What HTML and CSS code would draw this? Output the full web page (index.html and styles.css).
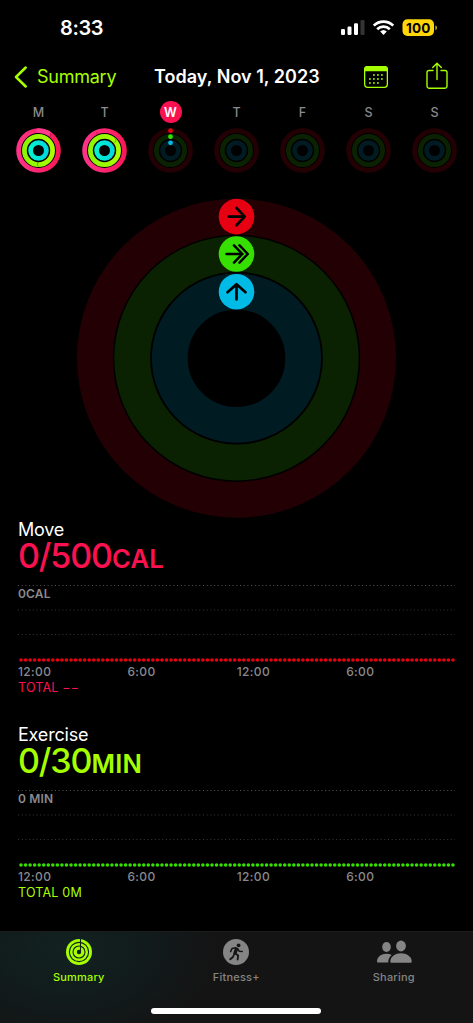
FILE: index.html
```html
<!DOCTYPE html>
<html lang="en">
<head>
<meta charset="utf-8">
<title>Activity Summary</title>
<link rel="stylesheet" href="styles.css">
</head>
<body>
<svg class="defs" width="0" height="0" aria-hidden="true">
  <defs>
    <linearGradient id="pink" x1="0" y1="0" x2="1" y2="0"><stop offset="0" stop-color="#ff3288"/><stop offset="1" stop-color="#f9195a"/></linearGradient>
    <linearGradient id="lime" x1="0" y1="0" x2="1" y2="0"><stop offset="0" stop-color="#8cf500"/><stop offset="1" stop-color="#aaff00"/></linearGradient>
    <linearGradient id="aqua" x1="0" y1="0" x2="1" y2="0"><stop offset="0" stop-color="#00f2d0"/><stop offset="1" stop-color="#00d8e0"/></linearGradient>
    <g id="tracks" fill="none">
      <circle cx="22.5" cy="22.5" r="19.9" stroke="#230004" stroke-width="4.8"/>
      <circle cx="22.5" cy="22.5" r="14.1" stroke="#0a2202" stroke-width="4.8"/>
      <circle cx="22.5" cy="22.5" r="7.9" stroke="#011b23" stroke-width="4.8"/>
    </g>
    <g id="full" fill="none">
      <circle cx="22.5" cy="22.5" r="19.9" stroke="url(#pink)" stroke-width="4.8"/>
      <circle cx="22.5" cy="22.5" r="14.1" stroke="url(#lime)" stroke-width="4.8"/>
      <circle cx="22.5" cy="22.5" r="7.9" stroke="url(#aqua)" stroke-width="4.8"/>
    </g>
  </defs>
</svg>
<div class="screen">
  <header class="status">
    <span class="clock">8:33</span>
    <svg class="status-icons" width="100" height="20" viewBox="0 0 100 20">
      <g fill="#fff">
        <rect x="1" y="11" width="4" height="6" rx="1.2"/>
        <rect x="7.5" y="8.5" width="4" height="8.500" rx="1.2"/>
        <rect x="14" y="5.200" width="4" height="11.800" rx="1.2"/>
      </g>
      <rect x="20.500" y="2" width="4" height="15" rx="1.2" fill="#343436"/>
      <g fill="none" stroke="#fff" stroke-width="2.700">
        <path d="M33.800 7.600a13.600 13.600 0 0 1 19.400 0"/>
        <path d="M37.200 11.200a9 9 0 0 1 12.600 0"/>
      </g>
      <path d="M43.500 17l-3.300-3.400a4.900 4.900 0 0 1 6.600 0z" fill="#fff"/>
      <rect x="62.500" y="1.300" width="31.500" height="16.700" rx="5" fill="#ffd60a"/>
      <path d="M95.500 7.200a3 3 0 0 1 0 5z" fill="#ffd60a"/>
      <text class="battery" x="78.200" y="14.700" text-anchor="middle">100</text>
    </svg>
  </header>

  <nav class="nav">
    <svg width="14" height="22" viewBox="0 0 14 22"><path d="M11.700 1.500L2 11l9.700 9.500" fill="none" stroke="#a6ff00" stroke-width="2.500" stroke-linecap="round" stroke-linejoin="round"/></svg>
    <span class="back">Summary</span>
    <h1 class="title">Today, Nov 1, 2023</h1>
    <svg class="calendar" width="24" height="22" viewBox="0 0 24 22">
      <rect x=".65" y=".65" width="22.700" height="20.700" rx="3" fill="none" stroke="#a6ff00" stroke-width="1.300"/>
      <path d="M0 5.300V3.500A3.500 3.500 0 0 1 3.500 0h17A3.500 3.500 0 0 1 24 3.500v1.800z" fill="#a6ff00"/>
      <path d="M9 9h10.500M5 13h14.500M5 17h10.500" stroke="#a6ff00" stroke-width="1.600" stroke-dasharray="1.800 2.200" fill="none"/>
    </svg>
    <svg class="share" width="22" height="28" viewBox="0 0 22 28"><path d="M7 8.500H3A2 2 0 0 0 1 10.500V24a2.300 2.300 0 0 0 2.300 2.300h15.400A2.300 2.300 0 0 0 21 24V10.500a2 2 0 0 0-2-2h-4M11 17.500V1.500M6.700 5.500L11 1.200l4.300 4.300" fill="none" stroke="#a6ff00" stroke-width="1.400" stroke-linecap="round" stroke-linejoin="round"/></svg>
  </nav>

  <section class="week">
    <div class="day"><span class="letter">M</span>
      <svg width="45" height="45"><use href="#full"/><path d="M22.500 2.600a19.900 19.900 0 0 1 9.900 2.600" fill="none" stroke="#ff3b8b" stroke-width="4.800" stroke-linecap="round"/><path d="M34.400 5.200a4 4 0 0 1 0 3.400" fill="none" stroke="#b30e3c" stroke-width=".8"/><path d="M22.600 34a2.600 2.600 0 0 0 0 4.400" fill="none" stroke="#52a000"/></svg></div>
    <div class="day"><span class="letter">T</span>
      <svg width="45" height="45"><use href="#full"/><path d="M15.200 4v4" fill="none" stroke="#b30e3c" stroke-width=".8"/><path d="M33 10.500a2.500 2.500 0 0 1-.5 4" fill="none" stroke="#52a000"/></svg></div>
    <div class="day"><span class="letter today">W</span>
      <svg width="45" height="45"><use href="#tracks"/><circle cx="22.500" cy="2.700" r="2.400" fill="#e60012"/><circle cx="22.500" cy="8.700" r="2.400" fill="#37df00"/><circle cx="22.500" cy="14.800" r="2.400" fill="#00bbe5"/></svg></div>
    <div class="day"><span class="letter">T</span><svg width="45" height="45"><use href="#tracks"/></svg></div>
    <div class="day"><span class="letter">F</span><svg width="45" height="45"><use href="#tracks"/></svg></div>
    <div class="day"><span class="letter">S</span><svg width="45" height="45"><use href="#tracks"/></svg></div>
    <div class="day"><span class="letter">S</span><svg width="45" height="45"><use href="#tracks"/></svg></div>
  </section>

  <svg class="rings" width="321" height="320" viewBox="0 0 321 320">
    <g fill="none" stroke-width="35.800">
      <circle cx="160.500" cy="160.200" r="141.600" stroke="#230004"/>
      <circle cx="160.500" cy="160.200" r="104.300" stroke="#0a2202"/>
      <circle cx="160.500" cy="160.200" r="66.700" stroke="#011b23"/>
    </g>
    <circle cx="160.500" cy="18.600" r="17.800" fill="#e60012"/>
    <circle cx="160.500" cy="56" r="17.800" fill="#37df00"/>
    <circle cx="160.500" cy="93.700" r="17.800" fill="#00bbe5"/>
    <g fill="none" stroke="#000" stroke-width="2.700" stroke-linecap="round" stroke-linejoin="round">
      <path d="M152.700 18.600h16M160.500 10l8.200 8.600-8.200 8.600"/>
      <path d="M150.500 56h16M158 47.400l8.300 8.600-8.300 8.600M163.500 47.400l8.300 8.600-8.300 8.600" stroke-width="2.500"/>
      <path d="M160.500 101.500V86.700M151.500 94.200l9-8 9 8"/>
    </g>
  </svg>

  <section class="metric move">
    <h2 class="name">Move</h2>
    <p class="value">0/500<span class="unit">CAL</span></p>
    <div class="chart">
      <svg class="plot" width="437" height="80" viewBox="0 0 437 80">
        <g stroke-width="1" stroke-dasharray="1 2.700">
          <path d="M0 2.500h437" stroke="#555"/><path d="M0 27h437M0 51.500h437" stroke="#383838"/>
        </g>
        <path class="bars" d="M3 77h432.200"/>
      </svg>
      <span class="scale">0CAL</span>
    </div>
    <div class="hours"><span>12:00</span><span>6:00</span><span>12:00</span><span>6:00</span></div>
    <p class="total">TOTAL −−</p>
  </section>

  <section class="metric exercise">
    <h2 class="name">Exercise</h2>
    <p class="value">0/30<span class="unit">MIN</span></p>
    <div class="chart">
      <svg class="plot" width="437" height="80" viewBox="0 0 437 80">
        <g stroke-width="1" stroke-dasharray="1 2.700">
          <path d="M0 2.500h437" stroke="#555"/><path d="M0 27h437M0 51.500h437" stroke="#383838"/>
        </g>
        <path class="bars" d="M3 77h432.200"/>
      </svg>
      <span class="scale">0 MIN</span>
    </div>
    <div class="hours"><span>12:00</span><span>6:00</span><span>12:00</span><span>6:00</span></div>
    <p class="total">TOTAL 0M</p>
  </section>

  <footer class="tabs">
    <div class="tab active">
      <svg width="26" height="26" viewBox="0 0 26 26"><circle cx="13" cy="13" r="13" fill="#a6ff00"/><g fill="none" stroke="#12201e" stroke-width="1.100"><circle cx="13" cy="13" r="9.600"/><circle cx="13" cy="13" r="6"/></g><circle cx="13" cy="13" r="2.200" fill="#12201e"/><path d="M14.500 0v12" stroke="#12201e" stroke-width="1.100"/></svg>
      <span>Summary</span>
    </div>
    <div class="tab">
      <svg width="26" height="26" viewBox="0 0 26 26"><circle cx="13" cy="13" r="13" fill="#858585"/><circle cx="15.600" cy="6.300" r="1.900" fill="#141414"/><g fill="none" stroke="#141414" stroke-linecap="round" stroke-linejoin="round"><path d="M13.500 10l-1.500 4" stroke-width="3.400"/><path d="M12.500 8.800l-3.500.8-1.400 3M14.800 9.800l1.500 2.500 2.900.2" stroke-width="1.500"/><path d="M12.300 14.500l2.900 2-.6 4M11 15.500l-1 2.500-2.800 2.300" stroke-width="1.800"/></g></svg>
      <span>Fitness+</span>
    </div>
    <div class="tab">
      <svg width="36" height="26" viewBox="0 0 36 26"><g fill="#858585"><ellipse cx="10.500" cy="8" rx="4.300" ry="4.900"/><ellipse cx="25" cy="7" rx="4.900" ry="5.400"/><path d="M1 22.500c0-5 4.500-7.800 9.500-7.800 2 0 3.700.4 5.200 1.200-2.300 1.700-3.500 4.200-3.500 7.600H2.200c-.8 0-1.200-.3-1.200-1z"/><path d="M14.300 22.500c0-5.200 5.300-8.300 10.700-8.300s10.700 3.100 10.700 8.300c0 .7-.5 1.300-1.300 1.300H15.600c-.8 0-1.300-.6-1.300-1.300z"/></g></svg>
      <span>Sharing</span>
    </div>
    <div class="home"></div>
  </footer>
</div>
</body>
</html>
```
FILE: styles.css
```css
* { box-sizing: border-box; }
body { margin: 0; background: #000; }
h1, h2, p { margin: 0; }
svg { display: block; flex: none; }
.defs { position: absolute; }
.screen {
  width: 473px;
  height: 1023px;
  display: flex;
  flex-direction: column;
  overflow: hidden;
  background: #000;
  color: #fff;
  font-family: Inter, "Liberation Sans", sans-serif;
}
.status {
  height: 56px;
  padding: 18px 33px 0 60px;
  display: flex;
  justify-content: space-between;
}
.clock { font-size: 20px; line-height: 21px; font-weight: 600; letter-spacing: -.35px; }
.battery { font-size: 13.500px; font-weight: 700; letter-spacing: .2px; fill: #000; }
.nav {
  height: 41px;
  padding: 0 25px 0 14px;
  display: flex;
  align-items: center;
}
.back { width: 80px; margin-left: 9px; padding-bottom: 1px; font-size: 18px; letter-spacing: -.25px; color: #a6ff00; white-space: nowrap; }
.title { width: 166px; margin-left: 37px; padding-bottom: 1px; font-size: 18px; font-weight: 600; letter-spacing: .03px; white-space: nowrap; }
.calendar { margin-left: 44px; }
.share { margin-left: auto; margin-top: -2px; }
.week { height: 101px; padding: 4px 5.500px 0; display: flex; }
.day { width: 66px; display: flex; flex-direction: column; align-items: center; gap: 4px; }
.letter {
  width: 22px;
  height: 23px;
  line-height: 23px;
  text-align: center;
  font-size: 12.500px;
  font-weight: 500;
  color: #8a8a8e;
}
.today { height: 22px; margin-bottom: 1px; border-radius: 50%; background: #fc1150; color: #fff; font-weight: 600; }
.rings { align-self: center; }
.metric { height: 205.300px; padding: 0 18px; }
.name { font-size: 18px; line-height: 23px; font-weight: 400; letter-spacing: -.2px; }
.value { height: 43px; font-size: 34px; line-height: 30px; font-weight: 500; letter-spacing: -1.100px; color: var(--accent); white-space: nowrap; }
.unit { font-size: 25.500px; font-weight: 600; letter-spacing: .3px; }
.chart { display: grid; height: 80px; }
.plot, .scale { grid-area: 1 / 1; }
.plot { margin-top: -1px; }
.scale { padding-top: 2px; font-size: 12px; line-height: 15px; font-weight: 600; letter-spacing: .15px; color: #8a8a8e; }
.bars { fill: none; stroke: var(--dots); stroke-width: 3.600; stroke-linecap: round; stroke-dasharray: 0 4.547; }
.hours { display: grid; grid-template-columns: repeat(4, 109.400px); font-size: 12px; line-height: 15px; font-weight: 500; letter-spacing: .35px; color: #8a8a8e; }
.total { padding-top: 1px; font-size: 12.500px; line-height: 15px; letter-spacing: .2px; color: var(--accent); }
.move { --accent: #fc1150; --dots: #e60012; }
.exercise { --accent: #a6ff00; --dots: #37df00; }
.tabs {
  height: 92px;
  margin-top: auto;
  padding-top: 7px;
  display: grid;
  grid-template-columns: repeat(3, 157.500px);
  grid-template-rows: 50px 34px;
  border-top: 1px solid #1c1c1c;
  background: radial-gradient(ellipse 150px 100px at 65px 15px, #12221f, #111c1d 45%, #141414);
}
.tab { display: flex; flex-direction: column; align-items: center; gap: 4px; font-size: 11px; line-height: 16px; font-weight: 500; letter-spacing: .2px; color: #858585; }
.active { color: #a6ff00; }
.home { grid-column: 1 / 4; justify-self: center; width: 170px; height: 6px; margin-top: 19px; border-radius: 3px; background: #fff; }
```
